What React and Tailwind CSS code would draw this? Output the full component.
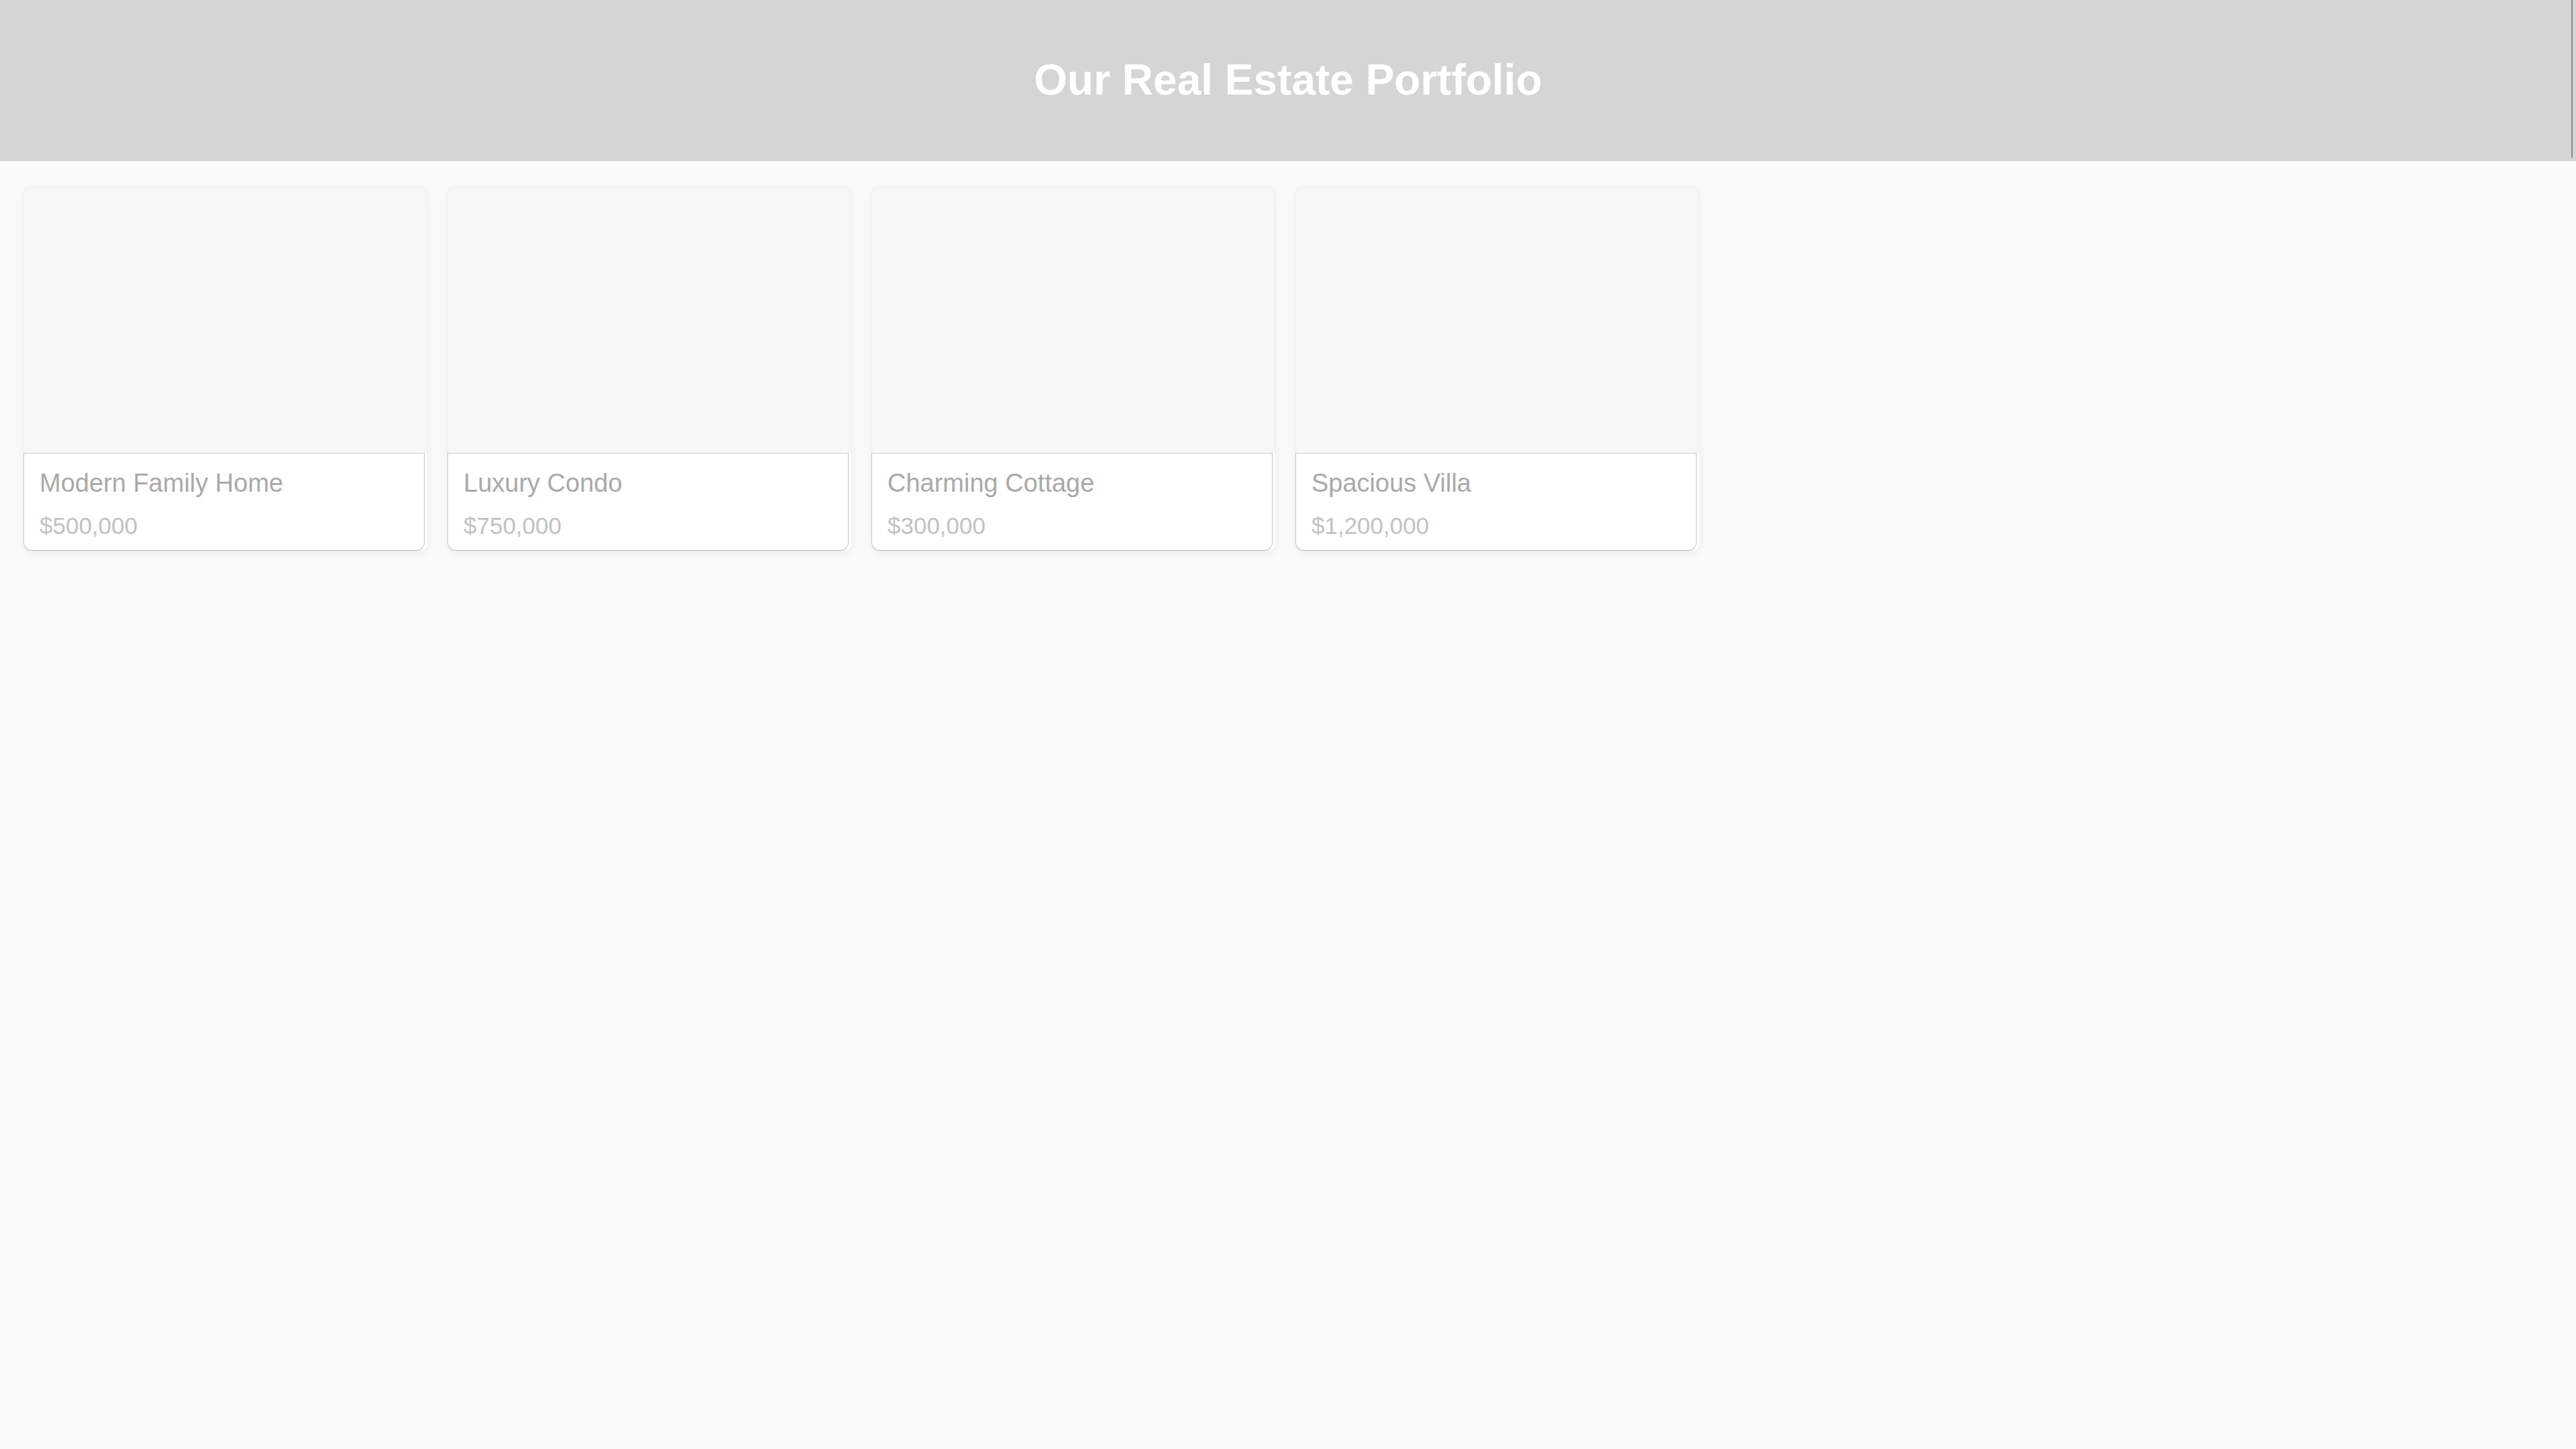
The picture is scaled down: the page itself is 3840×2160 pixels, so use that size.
import React from 'react';

const properties = [
  { id: 1, title: 'Modern Family Home', price: '$500,000' },
  { id: 2, title: 'Luxury Condo', price: '$750,000' },
  { id: 3, title: 'Charming Cottage', price: '$300,000' },
  { id: 4, title: 'Spacious Villa', price: '$1,200,000' },
];

const PropertyCard = ({ title, price }) => (
  <div className="w-[602px] rounded-xl bg-white shadow-[0_4px_14px_rgba(0,0,0,0.05)]">
    {/* Image placeholder */}
    <div className="h-[397px] rounded-t-xl border-x border-t border-[#efefef] bg-[#f7f7f7]"></div>
    {/* Details */}
    <div className="mr-[4px] rounded-b-xl border-x border-b border-t border-x-[#c4c4c4] border-b-[#b4b4b4] border-t-[#cfcfcf] bg-white px-[23px] pb-[16px] pt-[23px]">
      <h3 className="mb-[21px] text-[38px] leading-[1.15] font-normal text-[#a9a9a9]">{title}</h3>
      <p className="text-[35px] leading-[1.15] text-[#c2c2c2]">{price}</p>
    </div>
  </div>
);

const App = () => {
  return (
    <div
      className="min-h-screen bg-[#fafafa]"
      style={{ fontFamily: '"Liberation Sans", Arial, sans-serif' }}
    >
      {/* Header */}
      <header className="relative flex h-[240px] items-center justify-center bg-[#d5d5d5]">
        <h1 className="text-[64px] leading-[1.15] font-bold text-white">Our Real Estate Portfolio</h1>
        <div className="absolute right-[5px] top-0 h-[235px] w-[2px] bg-[#8a8a8a]"></div>
      </header>

      {/* Listings */}
      <div className="flex gap-[30px] px-[35px] pt-[38px]">
        {properties.map(p => (
          <PropertyCard key={p.id} title={p.title} price={p.price} />
        ))}
      </div>
    </div>
  );
};

export default App;
